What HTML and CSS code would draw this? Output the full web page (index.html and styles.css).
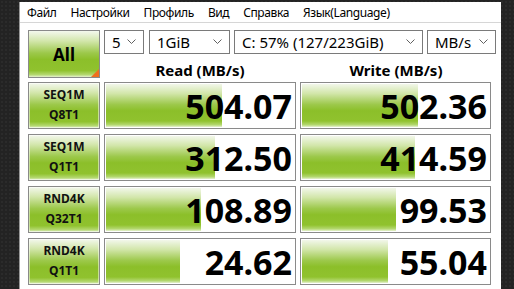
FILE: index.html
```html
<!DOCTYPE html>
<html>
<head>
<meta charset="utf-8">
<link rel="stylesheet" href="styles.css">
</head>
<body>
<div class="window">
  <div class="menubar">
    <span class="mi">Файл</span>
    <span class="mi">Настройки</span>
    <span class="mi">Профиль</span>
    <span class="mi">Вид</span>
    <span class="mi">Справка</span>
    <span class="mi">Язык(Language)</span>
  </div>
  <div class="content">
    <div class="top">
      <div class="allbtn"><span>All</span><i class="corner"></i></div>
      <div class="topright">
        <div class="combos">
          <div class="combo c-count"><span>5</span><svg width="9" height="6" viewBox="0 0 9 6"><path d="M0.5 0.5 L4.5 4.5 L8.5 0.5" fill="none" stroke="#606060" stroke-width="1"/></svg></div>
          <div class="combo c-size"><span>1GiB</span><svg width="9" height="6" viewBox="0 0 9 6"><path d="M0.5 0.5 L4.5 4.5 L8.5 0.5" fill="none" stroke="#606060" stroke-width="1"/></svg></div>
          <div class="combo c-drive"><span>C: 57% (127/223GiB)</span><svg width="9" height="6" viewBox="0 0 9 6"><path d="M0.5 0.5 L4.5 4.5 L8.5 0.5" fill="none" stroke="#606060" stroke-width="1"/></svg></div>
          <div class="combo c-unit"><span>MB/s</span><svg width="9" height="6" viewBox="0 0 9 6"><path d="M0.5 0.5 L4.5 4.5 L8.5 0.5" fill="none" stroke="#606060" stroke-width="1"/></svg></div>
        </div>
        <div class="heads">
          <div class="head">Read (MB/s)</div>
          <div class="head">Write (MB/s)</div>
        </div>
      </div>
    </div>
    <div class="rows">
      <div class="row">
        <div class="label">SEQ1M<br>Q8T1</div>
        <div class="val read"><div class="bar" style="width:61%"></div><span>504.07</span></div>
        <div class="val write"><div class="bar" style="width:61.5%"></div><span>502.36</span></div>
      </div>
      <div class="row">
        <div class="label">SEQ1M<br>Q1T1</div>
        <div class="val read"><div class="bar" style="width:57.5%"></div><span>312.50</span></div>
        <div class="val write"><div class="bar" style="width:60%"></div><span>414.59</span></div>
      </div>
      <div class="row">
        <div class="label">RND4K<br>Q32T1</div>
        <div class="val read"><div class="bar" style="width:50%"></div><span>108.89</span></div>
        <div class="val write"><div class="bar" style="width:49.5%"></div><span>99.53</span></div>
      </div>
      <div class="row">
        <div class="label">RND4K<br>Q1T1</div>
        <div class="val read"><div class="bar" style="width:39%"></div><span>24.62</span></div>
        <div class="val write"><div class="bar" style="width:45.3%"></div><span>55.04</span></div>
      </div>
    </div>
  </div>
</div>
</body>
</html>
```
FILE: styles.css
```css
html, body {
  margin: 0;
  padding: 0;
}
body {
  width: 514px;
  height: 289px;
  overflow: hidden;
  background: #232323;
  background-image: radial-gradient(#2b2b2b 1px, transparent 1px);
  background-size: 4px 4px;
  font-family: "Noto Sans", "Open Sans", sans-serif;
  color: #000;
}
.window {
  margin: 2px 0 0 19px;
  width: 481px;
  height: 300px;
  background: #fff;
  border-left: 1px solid #9a9a9a;
}
.menubar {
  height: 20px;
  display: flex;
  align-items: center;
  gap: 14px;
  padding-left: 7px;
  font-size: 12px;
  letter-spacing: -0.4px;
  border-bottom: 1px solid #d6d6d6;
  color: #000;
}
.content {
  padding: 7px 0 0 8px;
}
.top {
  display: flex;
  height: 52px;
  gap: 4px;
}
.allbtn {
  position: relative;
  width: 70px;
  height: 46px;
  border: 1px solid #8a8a8a;
  background: linear-gradient(#f4f8ee 0%, #d2e6aa 22%, #9cc84a 48%, #8cbf2a 62%, #90c22e 86%, #b4d870 95%, #e6f1d0 100%);
  display: flex;
  align-items: center;
  justify-content: center;
  font-weight: 700;
  font-size: 17px;
}
.corner {
  position: absolute;
  right: 0;
  bottom: 0;
  width: 0;
  height: 0;
  border-left: 8px solid transparent;
  border-bottom: 8px solid #ef6f1e;
}
.topright {
  display: flex;
  flex-direction: column;
}
.combos {
  display: flex;
  height: 24px;
  gap: 4px;
}
.combo {
  box-sizing: border-box;
  height: 24px;
  border: 1px solid #7a7a7a;
  display: flex;
  align-items: center;
  justify-content: space-between;
  padding: 0 7px 0 7px;
  font-size: 15px;
  line-height: 1;
}
.combo svg {
  flex: none;
}
.c-count { width: 40px; margin-right: 1px; }
.c-size { width: 81px; }
.c-drive { width: 189px; }
.c-unit { width: 69px; }
.heads {
  display: flex;
  gap: 4px;
  flex: 1;
  align-items: center;
}
.head {
  width: 192px;
  text-align: center;
  font-weight: 700;
  font-size: 15px;
  padding-top: 4px;
}
.rows {
  display: flex;
  flex-direction: column;
  gap: 5px;
}
.row {
  display: flex;
  gap: 4px;
  height: 47px;
}
.label {
  box-sizing: border-box;
  width: 72px;
  height: 47px;
  border: 1px solid #8a8a8a;
  background: linear-gradient(#f4f8ee 0%, #d2e6aa 22%, #9cc84a 48%, #8cbf2a 62%, #90c22e 86%, #b4d870 95%, #e6f1d0 100%);
  box-shadow: inset 0 0 0 1px rgba(255,255,255,0.5);
  text-align: center;
  font-weight: 700;
  font-size: 12px;
  line-height: 20px;
  padding-top: 2px;
  color: #111;
}
.val {
  position: relative;
  box-sizing: border-box;
  height: 47px;
  border: 1px solid #8a8a8a;
  background: #fff;
  display: flex;
  align-items: center;
  justify-content: flex-end;
  padding-right: 3px;
  font-weight: 700;
  font-size: 34px;
}
.val.read { width: 192px; }
.val.write { width: 191px; }
.bar {
  position: absolute;
  left: 1px;
  top: 1px;
  bottom: 1px;
  background: linear-gradient(#f2f7ea 0%, #d2e6aa 22%, #9cc84a 48%, #8cbf2a 62%, #90c22e 86%, #b4d870 95%, #e6f1d0 100%);
}
.val span {
  position: relative;
  line-height: 1;
  padding-top: 1px;
}
```
